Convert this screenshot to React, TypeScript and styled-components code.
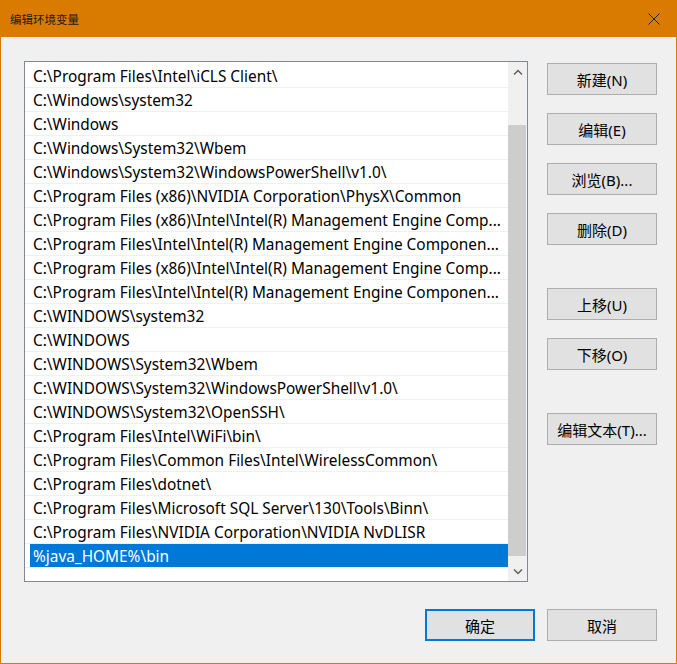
import * as React from 'react'
import styled, { createGlobalStyle } from 'styled-components'

const GlobalStyle = createGlobalStyle`
  html, body {
    margin: 0;
    padding: 0;
    background: #f0f0f0;
  }
  * { box-sizing: border-box; }
`

const FONT = `"Noto Sans", "Noto Sans CJK SC", sans-serif`

const paths = [
  'C:\\Program Files\\Intel\\iCLS Client\\',
  'C:\\Windows\\system32',
  'C:\\Windows',
  'C:\\Windows\\System32\\Wbem',
  'C:\\Windows\\System32\\WindowsPowerShell\\v1.0\\',
  'C:\\Program Files (x86)\\NVIDIA Corporation\\PhysX\\Common',
  'C:\\Program Files (x86)\\Intel\\Intel(R) Management Engine Comp...',
  'C:\\Program Files\\Intel\\Intel(R) Management Engine Componen...',
  'C:\\Program Files (x86)\\Intel\\Intel(R) Management Engine Comp...',
  'C:\\Program Files\\Intel\\Intel(R) Management Engine Componen...',
  'C:\\WINDOWS\\system32',
  'C:\\WINDOWS',
  'C:\\WINDOWS\\System32\\Wbem',
  'C:\\WINDOWS\\System32\\WindowsPowerShell\\v1.0\\',
  'C:\\WINDOWS\\System32\\OpenSSH\\',
  'C:\\Program Files\\Intel\\WiFi\\bin\\',
  'C:\\Program Files\\Common Files\\Intel\\WirelessCommon\\',
  'C:\\Program Files\\dotnet\\',
  'C:\\Program Files\\Microsoft SQL Server\\130\\Tools\\Binn\\',
  'C:\\Program Files\\NVIDIA Corporation\\NVIDIA NvDLISR',
  '%java_HOME%\\bin',
]

const Window = styled.div`
  width: 677px;
  height: 664px;
  display: flex;
  flex-direction: column;
  border: 1px solid #d97b00;
  border-top: none;
  background: #f0f0f0;
  font-family: ${FONT};
`

const TitleBar = styled.div`
  height: 37px;
  margin: 0 -1px;
  background: #d97b00;
  display: flex;
  align-items: center;
  justify-content: space-between;
  padding-left: 10px;
  font-size: 11.5px;
  color: #1a1a1a;
  flex-shrink: 0;
`

const CloseButton = styled.div`
  width: 46px;
  height: 37px;
  display: flex;
  align-items: center;
  justify-content: center;
`

const Body = styled.div`
  flex: 1;
  display: flex;
  flex-direction: column;
  padding: 24px 19px 0 23px;
`

const Main = styled.div`
  display: flex;
  gap: 19px;
`

const ListBox = styled.div`
  width: 504px;
  height: 521px;
  border: 1px solid #828790;
  background: #fff;
  display: flex;
`

const Rows = styled.div`
  flex: 1;
  padding-top: 2px;
  overflow: hidden;
`

const Row = styled.div`
  height: 24px;
  border-bottom: 1px solid #f0f0f0;
  padding-left: 5px;
  display: flex;
`

const Label = styled.div<{ $selected?: boolean }>`
  flex: 1;
  height: 23px;
  line-height: 23px;
  padding: 1px 0 0 3px;
  font-size: 15.4px;
  white-space: nowrap;
  overflow: hidden;
  text-overflow: ellipsis;
  background: ${p => (p.$selected ? '#0078d7' : 'transparent')};
  color: ${p => (p.$selected ? '#fff' : '#000')};
`

const ScrollBar = styled.div`
  width: 19px;
  background: #f0f0f0;
  display: flex;
  flex-direction: column;
  align-items: center;
`

const ArrowBox = styled.div`
  height: 19px;
  width: 100%;
  display: flex;
  align-items: center;
  justify-content: center;
  flex-shrink: 0;
`

const Track = styled.div`
  flex: 1;
  width: 100%;
  padding: 44px 1px 6px 0;
  display: flex;
`

const Thumb = styled.div`
  flex: 1;
  background: #cdcdcd;
`

const Side = styled.div`
  width: 110px;
  display: flex;
  flex-direction: column;
  gap: 18px;
  padding-top: 2px;
`

const Spacer = styled.div`
  height: 7px;
`

const Button = styled.div<{ $default?: boolean }>`
  width: 110px;
  height: 32px;
  background: #e1e1e1;
  border: ${p => (p.$default ? '2px solid #0078d7' : '1px solid #adadad')};
  display: flex;
  align-items: center;
  justify-content: center;
  font-size: 15px;
  color: #000;
  flex-shrink: 0;
`

const Footer = styled.div`
  display: flex;
  justify-content: flex-end;
  gap: 12px;
  margin-top: 27px;
`

const Chevron = ({ up }: { up?: boolean }) => (
  <svg width="10" height="6" viewBox="0 0 10 6">
    <path
      d={up ? 'M1 5.5 L5 1.5 L9 5.5' : 'M1 0.5 L5 4.5 L9 0.5'}
      fill="none"
      stroke="#606060"
      strokeWidth="1.5"
    />
  </svg>
)

export default function App() {
  return (
    <Window>
      <GlobalStyle />
      <TitleBar>
        <span>编辑环境变量</span>
        <CloseButton>
          <svg width="12" height="12" viewBox="0 0 12 12">
            <path d="M0.5 0.5 L11.5 11.5 M11.5 0.5 L0.5 11.5" stroke="#222" strokeWidth="1" />
          </svg>
        </CloseButton>
      </TitleBar>
      <Body>
        <Main>
          <ListBox>
            <Rows>
              {paths.map((p, i) => (
                <Row key={i}>
                  <Label $selected={i === paths.length - 1}>{p}</Label>
                </Row>
              ))}
            </Rows>
            <ScrollBar>
              <ArrowBox><Chevron up /></ArrowBox>
              <Track><Thumb /></Track>
              <ArrowBox><Chevron /></ArrowBox>
            </ScrollBar>
          </ListBox>
          <Side>
            <Button>新建(N)</Button>
            <Button>编辑(E)</Button>
            <Button>浏览(B)...</Button>
            <Button>删除(D)</Button>
            <Spacer />
            <Button>上移(U)</Button>
            <Button>下移(O)</Button>
            <Spacer />
            <Button>编辑文本(T)...</Button>
          </Side>
        </Main>
        <Footer>
          <Button $default>确定</Button>
          <Button>取消</Button>
        </Footer>
      </Body>
    </Window>
  )
}
